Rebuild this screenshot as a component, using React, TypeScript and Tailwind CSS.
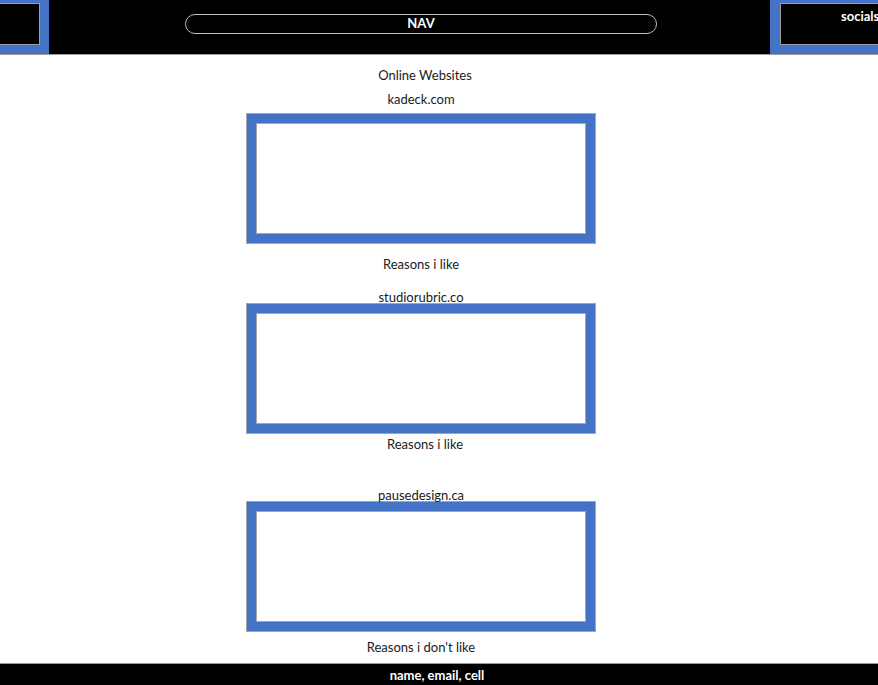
const font = { fontFamily: 'Lato, "Open Sans", sans-serif' };

function SiteBox() {
    return (
        <div className="h-[131px] w-full border border-[#a6a6a6] bg-[#4472c4] p-[9px]">
            <div className="h-full w-full border border-[#a6a6a6] bg-white" />
        </div>
    );
}

function Label({ children, className = '' }: { children: React.ReactNode; className?: string }) {
    return (
        <p className={`relative z-10 text-center text-[13px] leading-[18px] text-[#1a1a1a] ${className}`}>
            {children}
        </p>
    );
}

export default function App() {
    return (
        <div className="flex min-h-[685px] w-[878px] flex-col bg-white" style={font}>
            {/* header */}
            <header className="flex h-[55px] items-start border-b border-[#9a9a9a] bg-black">
                <div className="h-[54px] w-[49px] bg-[#4472c4] pt-[3px]">
                    <div className="h-[42px] w-[40px] border border-l-0 border-[#a0a0a0] bg-black" />
                </div>
                <div className="ml-[136px] mt-[14px] flex h-[20px] w-[472px] items-center justify-center rounded-full border border-[#bfbfbf] text-[13px] font-bold text-white">
                    NAV
                </div>
                <div className="ml-auto h-[54px] w-[108px] overflow-hidden bg-[#4472c4] pl-[10px] pt-[3px]">
                    <div className="h-[42px] w-[140px] border border-[#a0a0a0] bg-black pl-[60px] pt-[3px] text-[13px] font-bold leading-[18px] text-white">
                        socials
                    </div>
                </div>
            </header>

            {/* websites */}
            <main className="ml-[246px] flex w-[350px] flex-col pt-[11px]">
                <Label className="ml-[8px]">Online Websites</Label>
                <Label className="mt-[6px]">kadeck.com</Label>
                <div className="mt-[5px]">
                    <SiteBox />
                </div>
                <Label className="mt-[11px]">Reasons i like</Label>
                <Label className="mt-[15px]">studiorubric.co</Label>
                <div className="-mt-[3px]">
                    <SiteBox />
                </div>
                <Label className="ml-[8px] mt-[1px]">Reasons i like</Label>
                <Label className="mt-[33px]">pausedesign.ca</Label>
                <div className="-mt-[3px]">
                    <SiteBox />
                </div>
                <Label className="mt-[6px]">Reasons i don't like</Label>
            </main>

            <footer className="mt-[7px] flex h-[22px] items-center justify-center border-t border-[#9a9a9a] bg-black pr-[4px] pt-[3px] text-[13px] font-bold text-white">
                name, email, cell
            </footer>
        </div>
    );
}
